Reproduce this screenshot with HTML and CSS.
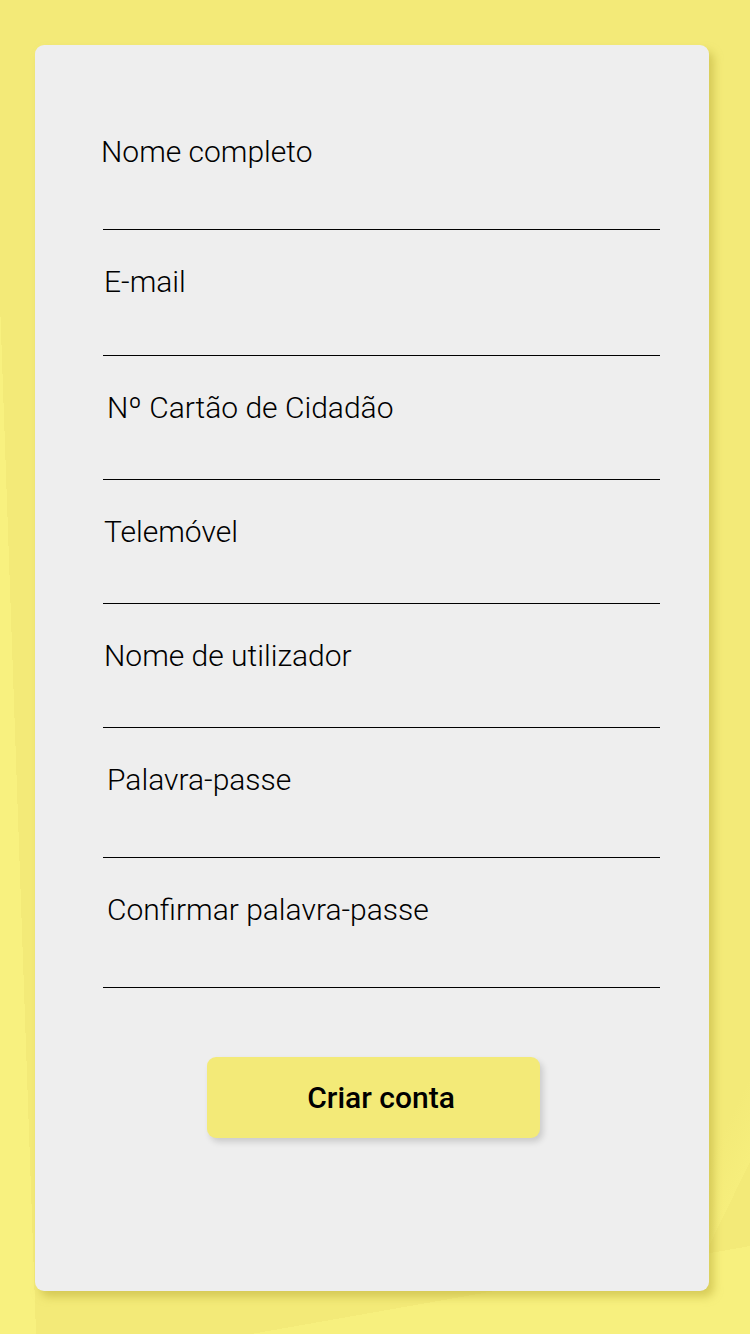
FILE: index.html
```html
<!DOCTYPE html>
<html lang="pt">
<head>
<meta charset="utf-8">
<title>Criar conta</title>
<link rel="stylesheet" href="styles.css">
</head>
<body>
<div class="bg">
  <form class="card">
    <div class="fields">
      <label class="field field--tall"><span class="label label--x0">Nome completo</span></label>
      <label class="field field--mid"><span class="label label--x2">E-mail</span></label>
      <label class="field"><span class="label label--x5">Nº Cartão de Cidadão</span></label>
      <label class="field"><span class="label label--x2">Telemóvel</span></label>
      <label class="field"><span class="label label--x2">Nome de utilizador</span></label>
      <label class="field field--tall"><span class="label label--x5">Palavra-passe</span></label>
      <label class="field field--tall"><span class="label label--x5">Confirmar palavra-passe</span></label>
    </div>
    <div class="actions">
      <button type="button" class="btn">Criar conta</button>
    </div>
  </form>
</div>
</body>
</html>
```
FILE: styles.css
```css
html, body {
  margin: 0;
  padding: 0;
}
body {
  width: 750px;
  height: 1334px;
  overflow: hidden;
  font-family: Roboto, "Liberation Sans", sans-serif;
}
.bg {
  width: 750px;
  height: 1334px;
  box-sizing: border-box;
  padding: 45px 41px 43px 35px;
  background:
    linear-gradient(88deg, #f8f17f 0 36px, rgba(248,241,127,0) 36px),
    linear-gradient(170deg, rgba(248,241,127,0) 0 94%, #f7f07e 94%),
    linear-gradient(-64deg, rgba(248,241,127,0) 0 6%, #f6ee7c 6%, rgba(248,241,127,0) 9%),
    #f3ea78;
}
.card {
  width: 674px;
  height: 1246px;
  box-sizing: border-box;
  background: #eeeeee;
  border-radius: 9px;
  box-shadow: 5px 6px 8px rgba(190, 175, 60, 0.55);
  padding: 55px 49px 0 68px;
  display: flex;
  flex-direction: column;
}
.fields {
  display: flex;
  flex-direction: column;
}
.field {
  display: block;
  box-sizing: border-box;
  height: 124px;
  border-bottom: 1px solid #000;
  padding-top: 34px;
}
.field--mid { height: 126px; }
.field--tall { height: 130px; }
.label {
  display: block;
  font-size: 30px;
  font-weight: 300;
  line-height: 36px;
  color: #000;
}
.label--x0 { margin-left: -2px; }
.label--x2 { margin-left: 1px; }
.label--x5 { margin-left: 4px; }
.actions {
  display: flex;
  justify-content: flex-start;
  padding-top: 69px;
  padding-left: 104px;
}
.btn {
  width: 333px;
  height: 81px;
  border: none;
  border-radius: 9px;
  background: #f3ea78;
  box-shadow: 3px 4px 6px rgba(0, 0, 0, 0.15);
  font-family: Roboto, "Liberation Sans", sans-serif;
  font-size: 30px;
  font-weight: 500;
  color: #000;
  padding: 0 0 0 15px;
}
```
